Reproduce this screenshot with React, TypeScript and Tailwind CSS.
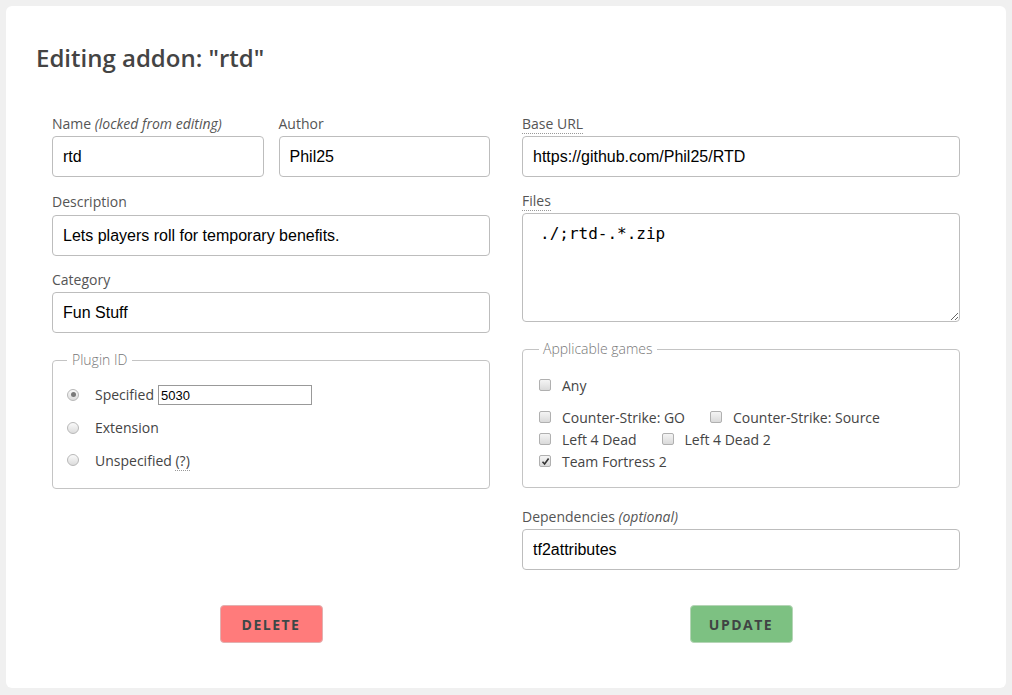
import React from "react";

const label = "text-[14px] leading-5 text-[#555] font-['Open_Sans',sans-serif]";
const input =
    "block w-full h-[41px] rounded-[4px] border border-[#bdbdbd] bg-white px-[10px] text-[16px] text-black font-['Liberation_Sans',Arial,sans-serif] outline-none";

const Radio = ({ checked }: { checked?: boolean }) => (
    <span className="relative flex h-[12px] w-[12px] shrink-0 items-center justify-center rounded-full border border-[#b8b8b8] bg-gradient-to-b from-[#fafafa] to-[#dcdcdc]">
        {checked && <span className="h-[5px] w-[5px] rounded-full bg-[#7a7a7a]" />}
    </span>
);

const Check = ({ checked }: { checked?: boolean }) => (
    <span className="flex h-[12px] w-[12px] shrink-0 items-center justify-center rounded-[2px] border border-[#b0b0b0] bg-gradient-to-b from-[#f4f4f4] to-[#dadada]">
        {checked && (
            <svg width="9" height="9" viewBox="0 0 9 9">
                <path d="M1.5 4.8 L3.6 7 L7.6 1.6" fill="none" stroke="#333" strokeWidth="1.6" />
            </svg>
        )}
    </span>
);

const Game = ({ name, checked }: { name: string; checked?: boolean }) => (
    <span className="mr-[25px] inline-flex items-center gap-[11px]">
        <Check checked={checked} />
        <span>{name}</span>
    </span>
);

const App = () => {
    return (
        <div className="min-h-[695px] bg-[#f0f0f0] p-[6px] font-['Open_Sans',sans-serif]">
            <div className="rounded-[6px] bg-white px-[30px] pb-[45px] pt-[36px]">
                <h1 className="text-[24px] leading-8 font-semibold text-[#444]">Editing addon: "rtd"</h1>

                <div className="mt-[40px] grid grid-cols-2 gap-[32px] px-4">
                    {/* left column */}
                    <div>
                        <div className="grid grid-cols-2 gap-[15px]">
                            <div>
                                <div className={label}>
                                    Name <i>(locked from editing)</i>
                                </div>
                                <input className={input + " mt-[2px]"} defaultValue="rtd" readOnly />
                            </div>
                            <div>
                                <div className={label}>Author</div>
                                <input className={input + " mt-[2px]"} defaultValue="Phil25" />
                            </div>
                        </div>

                        <div className={label + " mt-[15px]"}>Description</div>
                        <input
                            className={input + " mt-[3px]"}
                            defaultValue="Lets players roll for temporary benefits."
                        />

                        <div className={label + " mt-[14px]"}>Category</div>
                        <input className={input + " mt-[2px]"} defaultValue="Fun Stuff" />

                        <fieldset className="mt-[17px] rounded-[4px] border border-[#c4c4c4] pb-[12px] pl-[14px] pt-[8px]">
                            <legend className="px-[5px] text-[14px] leading-5 font-light text-[#777]">Plugin ID</legend>
                            <div className="flex h-[33px] items-center gap-[16px] text-[14px] text-[#444]">
                                <Radio checked />
                                <span className="flex items-center">
                                    Specified
                                    <input
                                        className="ml-[4px] mt-[1px] h-[20px] w-[154px] border border-[#999] px-[2px] text-[13px] text-black font-['Liberation_Sans',Arial,sans-serif] outline-none"
                                        defaultValue="5030"
                                    />
                                </span>
                            </div>
                            <div className="flex h-[33px] items-center gap-[16px] text-[14px] text-[#444]">
                                <Radio />
                                <span>Extension</span>
                            </div>
                            <div className="flex h-[32px] items-center gap-[16px] text-[14px] text-[#444]">
                                <Radio />
                                <span>
                                    Unspecified{" "}
                                    <abbr className="border-b border-dotted border-[#999] no-underline">(?)</abbr>
                                </span>
                            </div>
                        </fieldset>
                    </div>

                    {/* right column */}
                    <div>
                        <div className={label}>
                            <abbr className="border-b border-dotted border-[#999] no-underline">Base URL</abbr>
                        </div>
                        <input className={input + " mt-[2px]"} defaultValue="https://github.com/Phil25/RTD" />

                        <div className={label + " mt-[14px]"}>
                            <abbr className="border-b border-dotted border-[#999] no-underline">Files</abbr>
                        </div>
                        <textarea
                            className="mt-[2px] block h-[109px] w-full rounded-[4px] border border-[#bdbdbd] py-[10px] pl-[17px] pr-[10px] text-[16px] leading-5 text-black font-['DejaVu_Sans_Mono',monospace] outline-none"
                            defaultValue="./;rtd-.*.zip"
                        />

                        <fieldset className="mt-[17px] rounded-[4px] border border-[#c4c4c4] pb-[15px] pl-4 pt-[10px] text-[14px] text-[#444]">
                            <legend className="px-1 text-[14px] leading-5 font-light text-[#777]">Applicable games</legend>
                            <div className="flex h-8 items-center">
                                <Game name="Any" />
                            </div>
                            <div className="mt-[5px]">
                                <div className="flex h-[22px] items-center">
                                    <Game name="Counter-Strike: GO" />
                                    <Game name="Counter-Strike: Source" />
                                </div>
                                <div className="flex h-[22px] items-center">
                                    <Game name="Left 4 Dead" />
                                    <Game name="Left 4 Dead 2" />
                                </div>
                                <div className="flex h-[22px] items-center">
                                    <Game name="Team Fortress 2" checked />
                                </div>
                            </div>
                        </fieldset>

                        <div className={label + " mt-[19px]"}>
                            Dependencies <i>(optional)</i>
                        </div>
                        <input className={input + " mt-[2px]"} defaultValue="tf2attributes" />
                    </div>
                </div>

                <div className="mt-[35px] grid grid-cols-2 gap-[32px] px-4">
                    <div className="flex justify-center">
                        <button className="h-[38px] w-[103px] rounded-[4px] border border-[#e2b0b0] bg-[#ff7b7b] text-[14px] font-bold tracking-[1.5px] text-[#3c4848]">
                            DELETE
                        </button>
                    </div>
                    <div className="flex justify-center">
                        <button className="h-[38px] w-[103px] rounded-[4px] border border-[#b5d5b6] bg-[#7dc182] text-[14px] font-bold tracking-[1.5px] text-[#404444]">
                            UPDATE
                        </button>
                    </div>
                </div>
            </div>
        </div>
    );
};

export default App;
